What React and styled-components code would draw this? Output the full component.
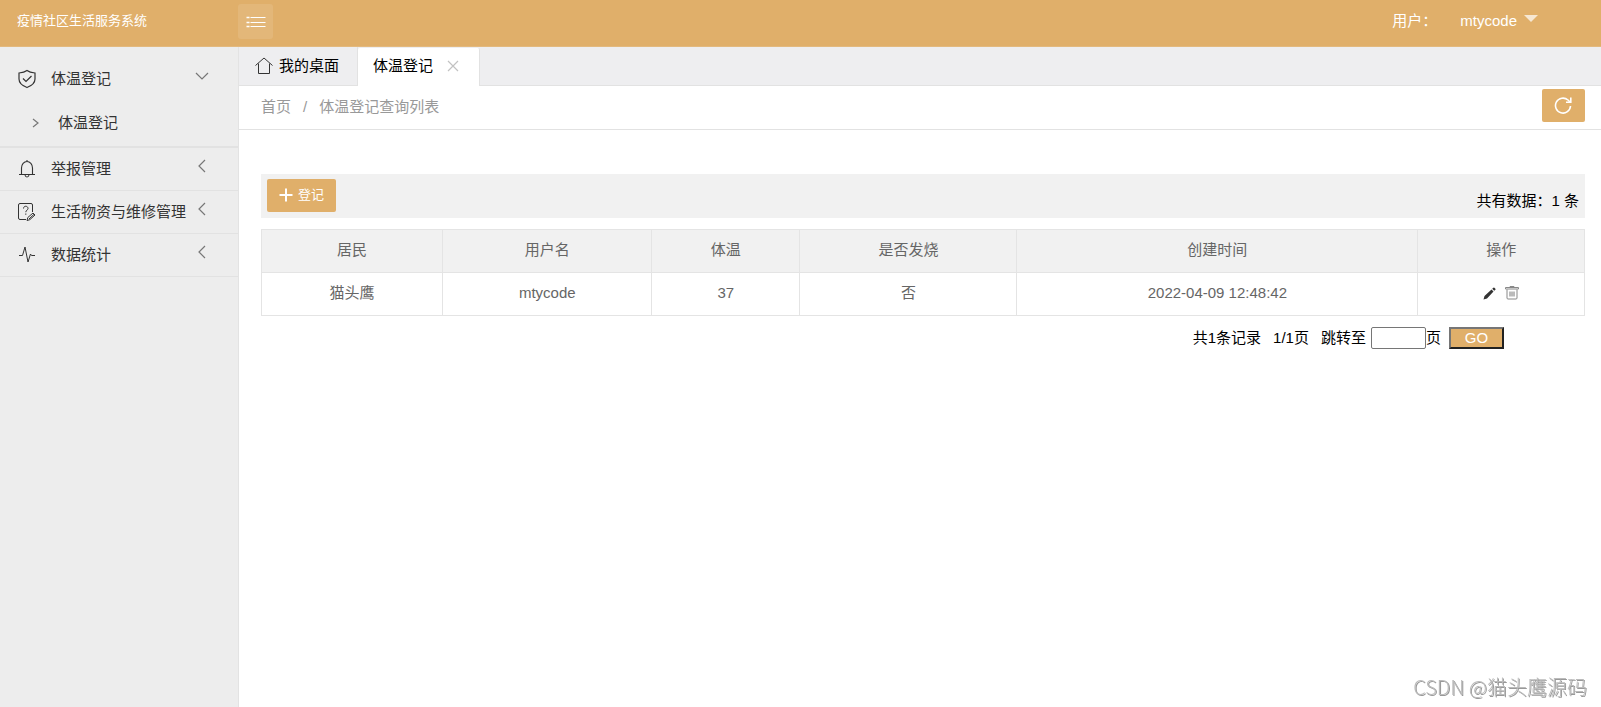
import React, { useState } from "react";
import styled, { createGlobalStyle, css } from "styled-components";

const GlobalStyle = createGlobalStyle`
  * {
    box-sizing: border-box;
  }

  body {
    margin: 0;
    background: #fff;
    color: #000;
    font-family: "Liberation Sans", "Noto Sans CJK SC", sans-serif;
    font-size: 15px;
    line-height: 22px;
  }

  button,
  input {
    font: inherit;
  }

  a {
    color: inherit;
    text-decoration: none;
  }

  svg {
    display: block;
    flex: none;
  }
`;

const Page = styled.div`
  display: flex;
  flex-direction: column;
  min-height: 100vh;
`;

const Header = styled.header`
  display: flex;
  align-items: flex-start;
  height: 47px;
  background: #e0af6a;
  border-bottom: 1px solid #e3b97e;
  color: #fff;
`;

const Brand = styled.a`
  width: 238px;
  padding: 10px 17px;
  font-size: 13px;
`;

const MenuToggle = styled.button`
  display: flex;
  align-items: center;
  justify-content: center;
  width: 35px;
  height: 35px;
  margin-top: 4px;
  padding: 0;
  border: 0;
  border-radius: 3px;
  background: rgba(255, 255, 255, 0.1);
  color: #fff;
`;

const User = styled.div`
  display: flex;
  margin-left: auto;
  padding: 10px 63px 0 0;
`;

const UserLabel = styled.span`
  width: 68px;
`;

const UserMenu = styled.button`
  display: flex;
  gap: 7px;
  padding: 0;
  border: 0;
  background: none;
  color: #fff;
`;

const Caret = styled.span`
  margin-top: 5px;
  border: 7px solid transparent;
  border-top-color: rgba(255, 255, 255, 0.7);
  border-bottom: 0;
  height: 7px;
`;

const Body = styled.div`
  display: flex;
  flex: 1;
`;

const Sidebar = styled.nav`
  flex: none;
  width: 239px;
  background: #ededed;
  border-right: 1px solid #e3e3e3;
  color: #333;
`;

const MenuGroup = styled.div`
  border-bottom: 1px solid #e2e2e2;

  ${props =>
    props.$open &&
    css`
      padding-top: 11px;
      border-bottom-width: 2px;
    `}
`;

const MenuItem = styled.button`
  display: flex;
  align-items: center;
  width: 100%;
  height: 42px;
  padding: 0 29px 0 17px;
  border: 0;
  background: none;
  color: inherit;
  text-align: left;
  white-space: nowrap;
`;

const MenuText = styled.span`
  flex: 1;
  margin-left: 14px;
`;

const Arrow = styled.span`
  padding-bottom: 6px;
  color: #777;
`;

const SubItem = styled.a`
  display: flex;
  align-items: center;
  gap: 17px;
  height: 46px;
  padding-left: 30px;

  svg {
    color: #777;
  }
`;

const Main = styled.main`
  flex: 1;
  min-width: 0;
`;

const Tabs = styled.div`
  display: flex;
  align-items: flex-end;
  height: 39px;
  background: #eeeef0;
  border-bottom: 1px solid #e2e2e2;
`;

const Tab = styled.div`
  display: flex;
  align-items: center;
  height: 38px;
  padding: 0 18px 0 16px;
  border-right: 1px solid #e2e2e2;

  ${props =>
    props.$active &&
    css`
      margin-bottom: -1px;
      padding: 0 20px 3px 15px;
      background: #fff;
      border-radius: 2px 2px 0 0;
    `}
`;

const TabButton = styled.button`
  display: flex;
  align-items: center;
  gap: 6px;
  padding: 0;
  border: 0;
  background: none;
  color: #000;

  svg {
    color: #333;
  }
`;

const CloseButton = styled.button`
  margin-left: 14px;
  padding: 1px 0 0;
  border: 0;
  background: none;
  color: #c2c2c2;
`;

const Crumbs = styled.div`
  display: flex;
  align-items: flex-start;
  justify-content: space-between;
  height: 44px;
  padding: 3px 16px 0 22px;
  border-bottom: 1px solid #e2e2e2;
  color: #999;
`;

const CrumbPath = styled.div`
  display: flex;
  gap: 12px;
  padding-top: 7px;
`;

const PrimaryButton = styled.button`
  display: flex;
  align-items: center;
  gap: 5px;
  height: 33px;
  padding: 0 12px 1px;
  border: 0;
  border-radius: 2px;
  background: #e0af6a;
  color: #fff;
  font-size: 13px;
`;

const Content = styled.section`
  padding: 44px 16px 0 22px;
`;

const Toolbar = styled.div`
  display: flex;
  align-items: flex-start;
  justify-content: space-between;
  height: 44px;
  padding: 5px 6px;
  background: #f1f1f1;
`;

const Total = styled.span`
  padding-top: 11px;
`;

const Table = styled.table`
  width: 100%;
  margin-top: 11px;
  border-collapse: collapse;
  table-layout: fixed;
  color: #666;

  th,
  td {
    height: 43px;
    padding: 0 0 2px;
    border: 1px solid #e4e4e4;
    font-weight: 400;
    text-align: center;
  }

  th {
    background: #f1f1f1;
  }
`;

const Col = styled.col`
  width: ${props => props.$share}%;
`;

const Actions = styled.div`
  display: flex;
  justify-content: center;
  gap: 9px;
`;

const IconButton = styled.button`
  padding: 0;
  border: 0;
  background: none;
  color: #333;
`;

const Pager = styled.form`
  display: flex;
  align-items: center;
  justify-content: flex-end;
  padding: 11px 81px 0 0;
`;

const PagerText = styled.span`
  margin-right: 12px;
`;

const PageLabel = styled.label`
  margin-right: 5px;
`;

const PageInput = styled.input`
  width: 55px;
  height: 22px;
  padding: 1px 2px;
  border: 1px solid #767676;
  border-radius: 2px;
  background: #fff;
`;

const GoButton = styled.button`
  width: 55px;
  height: 22px;
  margin-left: 8px;
  padding: 0;
  border: 2px solid;
  border-color: #767676 #212121 #212121 #767676;
  background: #e0af6a;
  color: #fff;
  line-height: 18px;
`;

const Watermark = styled.div`
  position: fixed;
  right: 14px;
  bottom: 7px;
  color: #bbb;
  font-family: "Noto Sans CJK SC", sans-serif;
  font-size: 20px;
  font-weight: 300;
  line-height: 26px;
  text-shadow: 1px 1px 0 #999;
`;

function Icon({ width = 18, height = 18, stroke = 1, children }) {
  return (
    <svg
      width={width}
      height={height}
      viewBox={`0 0 ${width} ${height}`}
      fill="none"
      stroke="currentColor"
      strokeWidth={stroke}
      aria-hidden="true"
    >
      {children}
    </svg>
  );
}

const ListIcon = () => (
  <Icon width={20} height={12} stroke={1}>
    <path d="M4.500 1.500h15M4.500 6.500h15M4.500 10.500h15" />
    <path d="M.5 1.500h3M.5 6.500h3M.5 10.500h3" strokeWidth="1.500" />
  </Icon>
);

const ShieldIcon = () => (
  <Icon width={20} height={20} stroke={1.2}>
    <path d="M10 1.500C8 3 5 3.700 2 4v6c0 4 3.500 6.800 8 8.500 4.500-1.700 8-4.500 8-8.500V4c-3-.3-6-1-8-2.500z" />
    <path d="M6 9.500l3 3 5.500-5.500" />
  </Icon>
);

const BellIcon = () => (
  <Icon width={20} height={20} stroke={1.1}>
    <path d="M4.500 15V9a5.500 6.500 0 0 1 11 0V15M2 15.500h16M8 16c.3 1.400 1 2 2 2s1.700-.6 2-2M10 1v1.500" />
  </Icon>
);

const RepairIcon = () => (
  <Icon width={20} height={20} stroke={1}>
    <path d="M9 17.500H3a1.500 1.500 0 0 1-1.500-1.500V3A1.500 1.500 0 0 1 3 1.500h11A1.500 1.500 0 0 1 15.500 3v7" />
    <path d="M6.500 6.500c0-3 4.500-3 4.500 0 0 1.500-2.200 1.700-2.200 3.700M8.800 11.500v1.300" />
    <path d="M10 18.500l.8-3 5.200-4.500 2 2-5.200 4.700zM12 17l5-4.700" />
  </Icon>
);

const PulseIcon = () => (
  <Icon width={20} height={20} stroke={1}>
    <path d="M2 10.500h3.500L8 2l3 15 2.500-8 1 1.500H18" strokeLinejoin="round" />
  </Icon>
);

const HomeIcon = () => (
  <Icon width={18} height={18} stroke={1}>
    <path d="M.5 8.500L9 1l8.500 7.500M3.500 6.500v10h11v-10" />
  </Icon>
);

const ChevronDown = () => (
  <Icon width={14} height={8} stroke={1.2}>
    <path d="M1 1l6 6 6-6" />
  </Icon>
);

const ChevronLeft = () => (
  <Icon width={12} height={14} stroke={1.2}>
    <path d="M8 1L2 7l6 6" />
  </Icon>
);

const ChevronRight = () => (
  <Icon width={11} height={10} stroke={1.2}>
    <path d="M3 1l5 4-5 4" />
  </Icon>
);

const CloseIcon = () => (
  <Icon width={12} height={12} stroke={1.2}>
    <path d="M1 1l10 10M11 1L1 11" />
  </Icon>
);

const RefreshIcon = () => (
  <Icon width={19} height={19} stroke={1.6}>
    <path d="M16.500 10a7.500 7.500 0 1 1-2.500-6l2 2" />
    <path d="M16.800 1.500v4.700h-4.800" />
  </Icon>
);

const PlusIcon = () => (
  <Icon width={14} height={14} stroke={2}>
    <path d="M7 .5v13M.5 7h13" />
  </Icon>
);

const PencilIcon = () => (
  <Icon width={13} height={13}>
    <path d="M.5 12.500l1-3.500L8.500 2.500l2 2L4 11.500zM9.200 1.800l1.200-1.100q.5-.4 1 0l1 1q.4.5 0 1l-1.200 1.100z" fill="currentColor" stroke="none" />
  </Icon>
);

const TrashIcon = () => (
  <Icon width={14} height={14}>
    <path d="M.5 3V1.500h13V3M5 1V.5h4V1M2 3.500V12q0 1 1 1h8q1 0 1-1V3.500M.5 3h13" stroke="#888" />
    <path d="M5 5.500v5M7 5.500v5M9 5.500v5" stroke="#777" />
  </Icon>
);

const menu = [
  { title: "体温登记", icon: ShieldIcon, children: ["体温登记"] },
  { title: "举报管理", icon: BellIcon },
  { title: "生活物资与维修管理", icon: RepairIcon },
  { title: "数据统计", icon: PulseIcon },
];

const columns = [
  { title: "居民", share: 13.7 },
  { title: "用户名", share: 15.8 },
  { title: "体温", share: 11.2 },
  { title: "是否发烧", share: 16.4 },
  { title: "创建时间", share: 30.3 },
  { title: "操作", share: 12.6 },
];

const rows = [["猫头鹰", "mtycode", "37", "否", "2022-04-09 12:48:42"]];

export default function App() {
  const [open, setOpen] = useState("体温登记");
  const [page, setPage] = useState("");

  return (
    <Page>
      <GlobalStyle />
      <Header>
        <Brand href="#">疫情社区生活服务系统</Brand>
        <MenuToggle aria-label="菜单">
          <ListIcon />
        </MenuToggle>
        <User>
          <UserLabel>用户：</UserLabel>
          <UserMenu>
            mtycode
            <Caret />
          </UserMenu>
        </User>
      </Header>
      <Body>
        <Sidebar>
          {menu.map(({ title, icon: MenuIcon, children }) => {
            const expanded = open === title && Boolean(children);
            return (
              <MenuGroup key={title} $open={expanded}>
                <MenuItem
                  aria-expanded={expanded}
                  onClick={() => setOpen(expanded ? "" : title)}
                >
                  <MenuIcon />
                  <MenuText>{title}</MenuText>
                  <Arrow>{expanded ? <ChevronDown /> : <ChevronLeft />}</Arrow>
                </MenuItem>
                {expanded &&
                  children.map(child => (
                    <SubItem href="#" key={child}>
                      <ChevronRight />
                      {child}
                    </SubItem>
                  ))}
              </MenuGroup>
            );
          })}
        </Sidebar>
        <Main>
          <Tabs>
            <Tab>
              <TabButton>
                <HomeIcon />
                我的桌面
              </TabButton>
            </Tab>
            <Tab $active>
              <TabButton>体温登记</TabButton>
              <CloseButton aria-label="关闭">
                <CloseIcon />
              </CloseButton>
            </Tab>
          </Tabs>
          <Crumbs>
            <CrumbPath>
              <a href="#">首页</a>
              <span>/</span>
              <a href="#">体温登记查询列表</a>
            </CrumbPath>
            <PrimaryButton aria-label="刷新">
              <RefreshIcon />
            </PrimaryButton>
          </Crumbs>
          <Content>
            <Toolbar>
              <PrimaryButton>
                <PlusIcon />
                登记
              </PrimaryButton>
              <Total>共有数据：1 条</Total>
            </Toolbar>
            <Table>
              <colgroup>
                {columns.map(column => (
                  <Col key={column.title} $share={column.share} />
                ))}
              </colgroup>
              <thead>
                <tr>
                  {columns.map(column => (
                    <th key={column.title}>{column.title}</th>
                  ))}
                </tr>
              </thead>
              <tbody>
                {rows.map(row => (
                  <tr key={row[1]}>
                    {row.map(cell => (
                      <td key={cell}>{cell}</td>
                    ))}
                    <td>
                      <Actions>
                        <IconButton aria-label="编辑">
                          <PencilIcon />
                        </IconButton>
                        <IconButton aria-label="删除">
                          <TrashIcon />
                        </IconButton>
                      </Actions>
                    </td>
                  </tr>
                ))}
              </tbody>
            </Table>
            <Pager onSubmit={event => event.preventDefault()}>
              <PagerText>共1条记录</PagerText>
              <PagerText>1/1页</PagerText>
              <PageLabel htmlFor="page">跳转至</PageLabel>
              <PageInput
                id="page"
                value={page}
                onChange={event => setPage(event.target.value)}
              />
              <span>页</span>
              <GoButton type="submit">GO</GoButton>
            </Pager>
          </Content>
        </Main>
      </Body>
      <Watermark>CSDN @猫头鹰源码</Watermark>
    </Page>
  );
}
